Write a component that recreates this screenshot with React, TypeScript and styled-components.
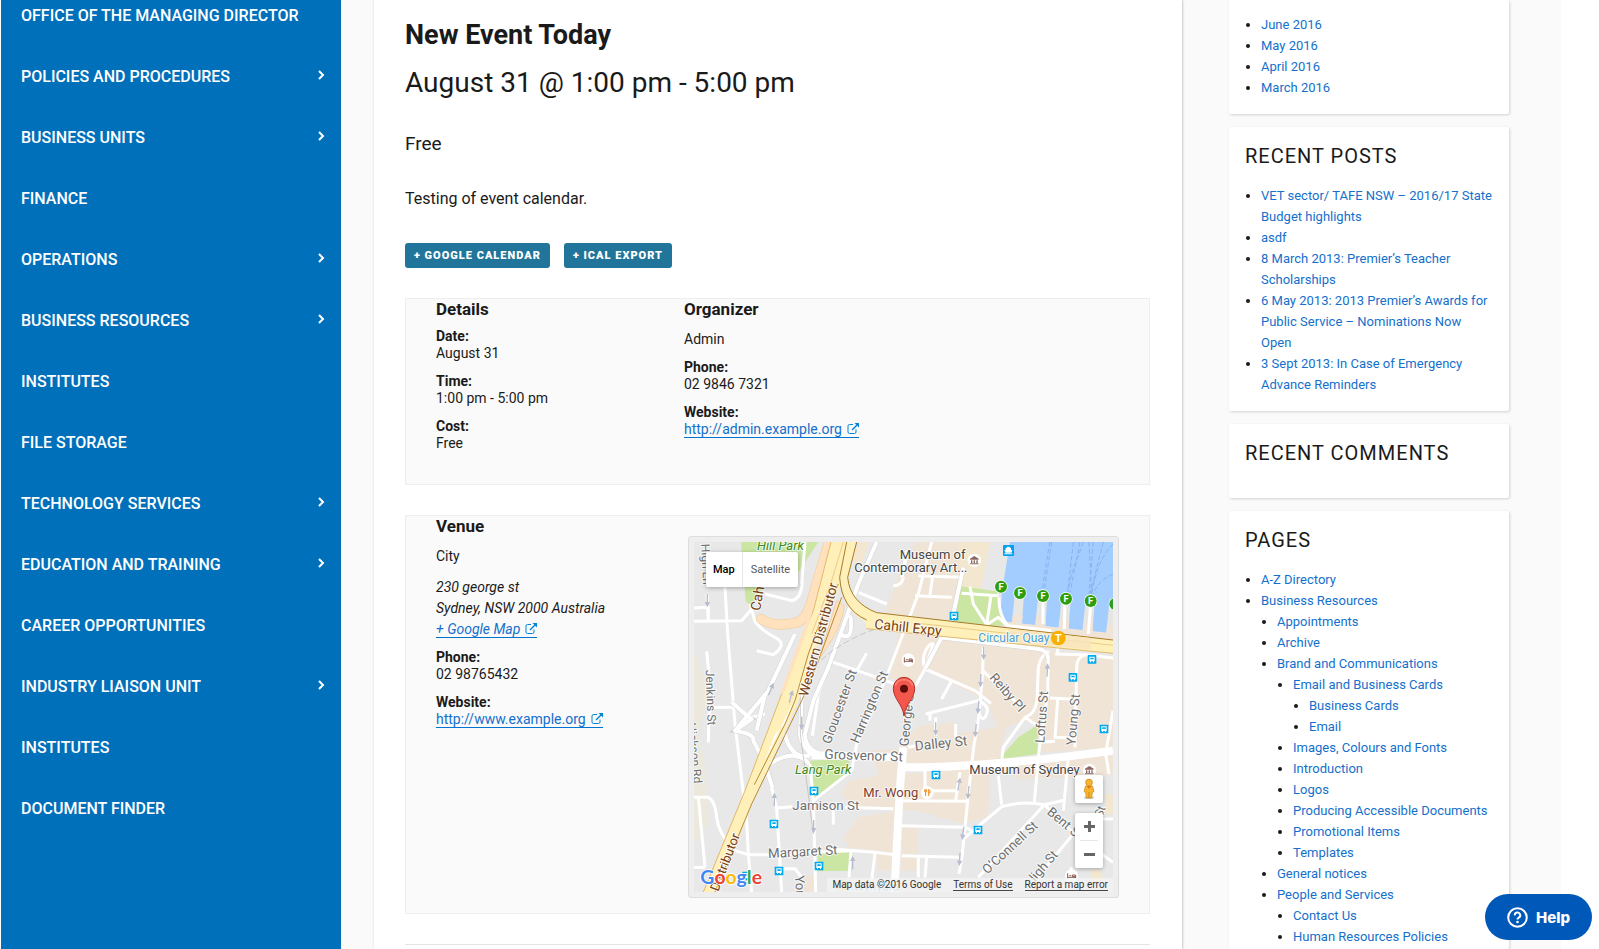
import React from 'react';
import styled, { createGlobalStyle, css } from 'styled-components';

const GlobalStyle = createGlobalStyle`
  *, *::before, *::after { box-sizing: border-box; }
  body {
    margin: 0;
    background: #fff;
    color: #1a1a1a;
    font-family: Roboto, "Liberation Sans", sans-serif;
    font-size: 14px;
  }
  h1, h2, h3, p, dl, dd, ul { margin: 0; padding: 0; }
  button { font: inherit; cursor: pointer; }
`;

/* ---------- page frame ---------- */

const Page = styled.div`
  display: flex;
  min-height: 100vh;
  padding: 0 38px 0 1px;
`;

const Sidebar = styled.nav`
  flex: 0 0 340px;
  background: #0070bb;
  overflow: hidden;
`;

const Menu = styled.ul`
  list-style: none;
  && { margin-top: -15px; }
`;

const MenuLink = styled.a`
  display: flex;
  align-items: center;
  justify-content: space-between;
  height: 61px;
  padding: 0 16px 0 20px;
  color: #fff;
  font-size: 16px;
  font-weight: 500;
  text-decoration: none;
  text-transform: uppercase;
  svg { margin-bottom: 3px; }
`;

const Body = styled.div`
  flex: 1;
  display: flex;
  gap: 47px;
  min-width: 0;
  padding: 0 52px 0 32px;
  background: #fafafa;
`;

const Main = styled.main`
  flex: 1;
  min-width: 0;
  padding: 17px 32px 0 31px;
  background: #fff;
  border-left: 1px solid #f0f0f0;
  box-shadow: 1px 0 2px rgba(0, 0, 0, 0.2);
`;

const Aside = styled.aside`
  flex: 0 0 280px;
  display: flex;
  flex-direction: column;
  gap: 13px;
`;

/* ---------- event ---------- */

const Title = styled.h1`
  font-size: 27px;
  line-height: 36px;
  font-weight: 700;
`;

const Schedule = styled.h2`
  padding-top: 12px;
  font-size: 28px;
  line-height: 36px;
  font-weight: 400;
`;

const Price = styled.p`
  padding-top: 31px;
  font-size: 19px;
  line-height: 24px;
`;

const Description = styled.p`
  padding-top: 29px;
  font-size: 16px;
  line-height: 28px;
`;

const Actions = styled.div`
  display: flex;
  gap: 14px;
  padding: 30px 0;
`;

const ExportButton = styled.button`
  height: 25px;
  padding: 0 9px;
  border: 0;
  border-radius: 3px;
  background: #21759b;
  color: #fff;
  font-size: 11px;
  line-height: 25px;
  font-weight: 900;
  letter-spacing: 1px;
  text-transform: uppercase;
`;

const Panel = styled.section<{ $first: number; $bottom: number }>`
  display: grid;
  grid-template-columns: ${(p) => p.$first}px minmax(0, 1fr);
  margin-bottom: 30px;
  padding: 0 30px ${(p) => p.$bottom}px;
  background: #fafafa;
  border: 1px solid #eee;
`;

const PanelTitle = styled.h3`
  margin-bottom: 9px;
  font-size: 17px;
  line-height: 20px;
  font-weight: 700;
`;

const Name = styled.p`
  && { padding: 1px 0 9px; }
  line-height: 21px;
`;

const Address = styled.address`
  padding: 1px 0 9px;
  line-height: 21px;
  font-style: italic;
`;

const Facts = styled.dl`
  display: flex;
  flex-direction: column;
  gap: 11px;
  line-height: 17px;
`;

const Term = styled.dt`
  font-weight: 700;
`;

const OuterLink = styled.a`
  border-bottom: 1px solid #0073d1;
  color: #1470cc;
  text-decoration: none;
  svg { margin-left: 5px; }
`;

const Rule = styled.hr`
  margin: 0;
  border: 0;
  border-top: 1px solid #e4e4e4;
`;

/* ---------- widgets ---------- */

const Widget = styled.section<{ $untitled?: boolean; $tail?: boolean }>`
  padding: ${(p) => (p.$untitled ? 14 : 21)}px 16px 16px;
  background: #fff;
  border-radius: 2px;
  box-shadow: 1px 1px 3px rgba(0, 0, 0, 0.16);
  ${(p) =>
    p.$tail &&
    css`
      flex: 1;
      padding-bottom: 0;
    `}
`;

const WidgetTitle = styled.h3`
  padding-bottom: 20px;
  font-size: 20px;
  line-height: 17px;
  font-weight: 400;
  letter-spacing: 1px;
  text-transform: uppercase;
`;

const Bullets = styled.ul`
  list-style: none;
  font-size: 13px;
  line-height: 21px;
  && { padding-left: 16px; }
  li { position: relative; }
  li::before {
    content: "";
    position: absolute;
    left: -15px;
    top: 9px;
    width: 4px;
    height: 4px;
    border-radius: 50%;
    background: #1a1a1a;
  }
  a {
    color: #1470cc;
    text-decoration: none;
  }
`;

const HelpButton = styled.button`
  position: fixed;
  right: 7px;
  bottom: 9px;
  display: flex;
  align-items: center;
  gap: 8px;
  height: 46px;
  padding: 0 22px;
  border: 0;
  border-radius: 23px;
  background: #0058b8;
  color: #fff;
  font-family: Inter, sans-serif;
  font-size: 15px;
  font-weight: 800;
`;

/* ---------- map ---------- */

const MapFrame = styled.div`
  margin-top: 20px;
  padding: 5px;
  border: 1px solid #ddd;
  border-radius: 3px;
  background: #eee;
`;

const MapView = styled.div`
  position: relative;
  overflow: hidden;
  height: 350px;
  background: #e8e8e8;
`;

const MapSvg = styled.svg`
  display: block;
  width: 100%;
  height: 100%;
`;

const TypeSwitch = styled.div`
  position: absolute;
  left: 12px;
  top: 10px;
  display: flex;
  border-radius: 2px;
  background: #fff;
  box-shadow: 0 1px 4px rgba(0, 0, 0, 0.3);
`;

const TypeButton = styled.button<{ $on?: boolean }>`
  height: 35px;
  padding: 0 ${(p) => (p.$on ? 7 : 8)}px;
  border: 0;
  border-left: ${(p) => (p.$on ? '0' : '1px solid #e6e6e6')};
  background: none;
  color: ${(p) => (p.$on ? '#000' : '#565656')};
  font-size: 11px;
  font-weight: ${(p) => (p.$on ? 500 : 400)};
`;

const MapTools = styled.div`
  position: absolute;
  right: 10px;
  bottom: 24px;
  display: flex;
  flex-direction: column;
  gap: 10px;
`;

const ToolBox = styled.div`
  width: 28px;
  border-radius: 2px;
  background: #fff;
  box-shadow: 0 1px 4px rgba(0, 0, 0, 0.3);
  hr {
    margin: 0 5px;
    border: 0;
    border-top: 1px solid #e6e6e6;
  }
`;

const ToolButton = styled.button<{ $h: number }>`
  display: flex;
  align-items: center;
  justify-content: center;
  width: 28px;
  height: ${(p) => p.$h}px;
  padding: 0;
  border: 0;
  background: none;
`;

const Credits = styled.div`
  position: absolute;
  right: 0;
  bottom: 0;
  display: flex;
  gap: 12px;
  height: 14px;
  padding: 0 5px;
  background: rgba(245, 245, 245, 0.7);
  color: #333;
  font-size: 10px;
  line-height: 13px;
  a {
    height: 13px;
    border-bottom: 1px solid #444;
    color: #333;
    text-decoration: none;
  }
`;

/* ---------- map drawing ---------- */

type LabelData = [text: string, x: number, y: number, angle: number, size: number, color: string, style?: string];

const GREY = '#6e6e6e';
const BROWN = '#754012';
const GREEN = '#3f8a1c';
const DARK = '#454545';

const labels: LabelData[] = [
  ['High Ln', 48, 30, 87, 36, GREY],
  ['Hill Park', 216, 47, 0, 39, GREEN, 'italic'],
  ['Cahill', 225, 232, -80, 42, BROWN],
  ['Western Distributor', 368, 490, -75, 41, BROWN],
  ['Distributor', 100, 1074, -69, 39, BROWN],
  ['Cahill Expy', 567, 284, 6, 42, BROWN],
  ['Jenkins St', 62, 408, 88, 36, GREY],
  ['Hickson Rd', 7, 568, 84, 36, GREY],
  ['Gloucester St', 436, 632, -70, 39, GREY],
  ['Harrington St', 520, 630, -67, 39, GREY],
  ['George St', 670, 638, -84, 39, GREY],
  ['Dalley St', 691, 650, -6, 41, GREY],
  ['Grosvenor St', 418, 674, 2, 41, GREY],
  ['Lang Park', 330, 721, 0, 39, GREEN, 'italic'],
  ['Jamison St', 322, 829, 0, 40, GREY],
  ['Margaret St', 250, 972, -3, 40, GREY],
  ['York St', 330, 1025, 87, 39, GREY],
  ['O’Connell St', 907, 1022, -43, 39, GREY],
  ['Bent St', 1084, 838, 40, 39, GREY],
  ['Reiby Pl', 912, 432, 49, 39, GREY],
  ['Loftus St', 1078, 628, -86, 39, GREY],
  ['Young St', 1171, 635, -85, 39, GREY],
  ['ligh St', 1050, 1045, -49, 39, GREY],
  ['St', 1250, 852, -68, 36, GREY],
  ['Museum of', 644, 74, 0, 39, DARK],
  ['Contemporary Art...', 508, 113, 0, 39, DARK],
  ['Museum of Sydney', 853, 721, 0, 39, DARK],
  ['Mr. Wong', 535, 790, 0, 39, '#7d4034'],
  ['Circular Quay', 880, 325, 0, 36, '#4a9fd0'],
  ['Wynyard', 505, 1070, 0, 36, '#8cc3e0'],
];

const beige = [
  'M690 24H860L830 140 802 262 600 236 640 130Z',
  'M640 290 770 308 1284 372V640L1062 656 1058 572 1012 560 940 590 905 500 745 420 718 400 690 452 612 432Z',
  'M700 575 812 566 816 600 965 575 940 680 700 702 640 700 580 720 560 650 640 646Z',
  'M660 720 916 700 910 850 830 870 700 830 650 830Z',
  'M585 650 640 646 632 830 500 820 470 780 490 740 580 724Z',
  'M520 850 630 832 620 1010 580 1010 570 950 490 940 475 910Z',
  'M650 880H700V1010H650Z',
  'M940 690 1284 660V722L1000 736Z',
  'M360 1024H390V1074H350Z',
];

const yellowish = [
  'M820 24H915L888 165 830 160Z',
  'M520 24H550L530 90 500 80Z',
  'M1260 780H1284V840H1262Z',
  'M1215 1010 1245 1005 1255 1040 1225 1050Z',
];

const parks = [
  'M168 24H400L330 130 240 150 200 220 182 200Z',
  'M815 155 935 172 945 215 968 275 905 275 802 262Z',
  'M372 680 495 672 490 715 385 795 376 740Z',
  'M398 958 502 952V1010L398 1012Z',
  'M1058 572V660L940 676 1000 610Z',
];

const thinRoads = [
  'M27 262 170 260 200 225', 'M27 222 70 220V262', 'M66 180 70 262', 'M120 160 128 300 150 570 185 860 190 960 200 1074',
  'M65 352 75 450 70 625', 'M80 520H150', 'M27 790H70Q90 800 95 850T150 950L190 962 260 962', 'M40 790 60 1000', 'M27 1000H60',
  'M240 180 320 200Q350 195 352 140', 'M195 210 210 262Q230 290 270 310T265 362L215 350',
  'M140 505 200 550 240 540', 'M520 175 605 210', 'M655 110Q660 155 625 155', 'M545 358 515 410',
  'M437 382 560 425 630 450', 'M437 382 400 480 382 605', 'M690 185 800 190', 'M745 110 735 185', 'M700 125 830 130',
  'M720 405 745 330Q735 325 722 350T720 405L692 455', 'M720 405 870 470 918 508', 'M800 440 770 495',
  'M722 540 880 500Q915 515 905 540T885 545', 'M735 540V560', 'M752 550V605', 'M812 570V610', 'M670 640 690 636',
  'M895 340 893 410 882 545 866 640 850 780 832 960 822 1020', 'M893 410 1010 520', 'M1090 350Q1065 370 1060 400L1056 500Q1050 540 1020 550L955 640 950 680',
  'M1020 550 1052 572', 'M1090 350 1088 480 1062 650 1048 805', 'M1095 492 1170 496', 'M1118 496 1110 610 1165 612', 'M1200 362Q1175 370 1175 400L1170 640',
  'M1110 360 1200 362 1284 372', 'M1060 625 1110 622', 'M1284 530 1262 660 1272 720',
  'M1150 670 1135 830', 'M940 725 950 812', 'M835 915 950 818Q1010 800 1078 812L1140 798', 'M1078 812 880 1030', 'M1078 812 1190 920', 'M1165 900 1040 1050',
  'M720 700V770H815', 'M825 715 812 800', 'M650 800 845 802', 'M645 875 840 880 862 890', 'M650 965 822 970', 'M725 970 720 1030', 'M700 970V1030',
  'M440 945 570 955 630 962', 'M570 958 560 1040', 'M498 950 492 1030', 'M275 822 322 818', 'M480 820 625 824', 'M445 820V872',
  'M260 760 275 822 290 1074', 'M375 690 385 800 392 1074', 'M385 800 500 710 515 630 600 440 700 180 740 24', 'M290 962 360 956 498 950', 'M290 1004 330 1004 350 1030',
  'M855 158 865 210 905 272', 'M830 178 940 185', 'M918 185 905 272', 'M942 190Q940 240 968 275L1100 290', 'M905 272 940 250 968 275',
  'M1074 190V270', 'M1140 200 1138 285', 'M1217 210 1210 300', 'M1290 215V300', 'M1118 330V358', 'M1160 1000 1140 1060', 'M1250 960 1284 985', 'M1240 855H1284', 'M360 24 350 150',
];

const midRoads = [
  'M835 100 800 262 770 310 720 405', 'M765 310 1060 345Q1088 348 1090 375', 'M667 50 650 130',
  'M575 24 520 150 470 290 430 400 385 500 360 600Q360 650 420 664', 'M490 250Q500 240 498 280T465 300',
  'M330 300 250 470 150 590', 'M140 505Q190 550 200 555L150 590Q210 600 205 620L240 690 262 760',
  'M355 380 345 600Q350 640 385 665', 'M300 600Q310 650 345 665H375', 'M240 480 215 590', 'M255 690Q330 640 372 690',
];

const wideRoads = ['M650 700Q900 702 1284 650', 'M655 640 645 760 628 1074', 'M380 664 655 670'];

const arrows: [number, number, number][] = [
  [67, 200, 180], [258, 465, 22], [318, 487, 15], [350, 568, 180], [268, 796, 0], [386, 878, 180], [503, 985, 0],
  [752, 585, 180], [872, 590, 185], [880, 520, 185], [887, 440, 183], [896, 358, 180], [1087, 408, 3],
  [822, 750, 10], [850, 776, 185], [834, 898, 187], [824, 976, 183],
];

const busStops: [number, number][] = [
  [807, 246], [1221, 376], [1164, 430], [1257, 585], [753, 723], [387, 771], [267, 870], [282, 1011], [402, 996], [879, 888], [185, 1026],
];

const ferries: [number, number][] = [[948, 158], [1005, 177], [1074, 186], [1143, 194], [1217, 201], [1291, 210]];

const piers = [990, 1060, 1130, 1202, 1273];

const Roads = ({ paths, width }: { paths: string[]; width: number }) => (
  <>
    {paths.map((d) => (
      <path key={d} d={d} fill="none" stroke="#fff" strokeWidth={width} strokeLinejoin="round" />
    ))}
  </>
);

const Areas = ({ paths, fill }: { paths: string[]; fill: string }) => (
  <>
    {paths.map((d) => (
      <path key={d} d={d} fill={fill} />
    ))}
  </>
);

const MuseumIcon = ({ x, y }: { x: number; y: number }) => (
  <g transform={`translate(${x} ${y})`}>
    <circle r="20" fill="#fff" />
    <path d="M-13-5 0-13 13-5V-2H-13ZM-10 0H-6V8H-10ZM-2 0H2V8H-2ZM6 0H10V8H6ZM-13 9H13V12H-13Z" fill="#8a6660" />
  </g>
);

const HotelIcon = ({ x, y }: { x: number; y: number }) => (
  <g transform={`translate(${x} ${y})`}>
    <circle r="20" fill="#fff" />
    <path d="M-12-8V8M12-2V8M-12 4H12M-7-1H-2M2-3H11V2H2Z" stroke="#8a5a50" strokeWidth="3" fill="none" />
  </g>
);

const StreetMap = () => (
  <MapSvg viewBox="27 24 1257 1050" preserveAspectRatio="xMidYMid slice" role="img" aria-label="Map of 230 George St, Sydney">
    <rect x="-600" y="0" width="2600" height="1100" fill="#e8e8e8" />
    <Areas paths={beige} fill="#f0e4d7" />
    <Areas paths={yellowish} fill="#f3e8cf" />
    <path d="M27 350 70 470 40 600 60 700 72 860 40 920H27Z" fill="#ece8dc" />
    <Areas paths={parks} fill="#cae6a2" />
    <path d="M975 24H1284V300L950 262Q945 230 952 165Z" fill="#a3ccff" />
    <path d="M950 262 1284 298V330L960 290Z" fill="#f0e4d7" />
    {piers.map((x, i) => (
      <g key={x}>
        <path d={`M${x} ${172 + i * 8}H${x + 28}L${x + 20} ${276 + i * 7}H${x - 10}Z`} fill="#e6e6e2" />
        <path d={`M${x - 7} ${244 + i * 7}H${x + 23}L${x + 20} ${284 + i * 7}H${x - 10}Z`} fill="#f0e4d7" />
      </g>
    ))}
    <g fill="none" stroke="#86b3f2" strokeWidth="3" strokeDasharray="14 7">
      <path d="M1100 24 1078 165" />
      <path d="M1094 24 1072 165" />
      <path d="M1165 24 1148 175" />
      <path d="M1185 24 1155 175" />
      <path d="M1195 24 1160 120 1148 175" />
      <path d="M1212 24 1220 180" />
      <path d="M1225 24 1212 180" />
      <path d="M1255 24 1215 180" />
      <path d="M1284 30Q1235 80 1220 180" />
      <path d="M1284 120Q1240 140 1224 180" />
    </g>
    <Roads paths={thinRoads} width={9} />
    <g fill="none" stroke="#d4d4d4" strokeWidth="15">
      {midRoads.map((d) => <path key={d} d={d} />)}
    </g>
    <Roads paths={midRoads} width={12} />
    <Roads paths={wideRoads} width={24} />

    <g fill="none" stroke="#b5b5b5" strokeWidth="2">
      <path d="M346 480V600L362 720 385 900" />
      <path d="M370 420Q440 330 575 284" strokeDasharray="20 8" />
    </g>

    {/* ramps */}
    <path d="M430 30Q400 130 380 200T320 268Q270 280 228 255" fill="none" stroke="#f3cf9f" strokeWidth="30" strokeLinecap="round" />
    <path d="M430 30Q400 130 380 200T320 268Q270 280 228 255" fill="none" stroke="#ffe2bd" strokeWidth="26" strokeLinecap="round" />
    <path d="M455 200 478 215Q470 270 445 310L400 380Z" fill="#ffe2bd" stroke="#f0c994" strokeWidth="2" />

    {/* western distributor */}
    <path d="M438 24H515L478 130 420 260 385 370 345 490 210 790 95 1074H55L180 770 290 480 335 350 385 230Z" fill="#ffefb9" />
    <path d="M438 24 385 230 335 350 290 480 180 770 55 1074" fill="none" stroke="#e0b96c" strokeWidth="3" />
    <path d="M455 170 370 380 300 570 270 600 240 680 335 480 385 340Z" fill="#fff" />
    <path d="M390 180 370 260 320 400 290 480" fill="none" stroke="#ffe2bd" strokeWidth="10" />
    <path d="M470 190 400 380 350 500 200 810 90 1074" fill="none" stroke="#b98a35" strokeWidth="3" />
    <path d="M460 150 410 250 370 360 330 500 300 570 208 752" fill="none" stroke="#b98a35" strokeWidth="3" />
    <path d="M475 24 440 140 380 300" fill="none" stroke="#e0b96c" strokeWidth="2" />

    {/* cahill expressway */}
    <path
      d="M478 24H515L488 130Q495 205 575 236L800 262 1284 318V358L1150 345 700 300 545 284 540 262Q470 225 464 130Z"
      fill="#ffefb9"
    />
    <path d="M515 24 488 130Q495 205 575 236L800 262 1284 318" fill="none" stroke="#a87b26" strokeWidth="3" />
    <path d="M485 24 464 130Q470 225 545 258" fill="none" stroke="#a87b26" strokeWidth="3" />
    <path d="M545 284 700 300 1150 345 1284 358" fill="none" stroke="#e0b96c" strokeWidth="3" />
    <path d="M700 268 1284 334" fill="none" stroke="#e0b96c" strokeWidth="2" />
    <path d="M970 284 1218 312V346L965 325Z" fill="#f8e3bd" opacity="0.8" />

    {arrows.map(([x, y, a]) => (
      <path key={`${x}-${y}`} transform={`translate(${x} ${y}) rotate(${a})`} d="M-2 20V-4H-8L0-20 8-4H2V20Z" fill="#b7bccf" />
    ))}

    <g fontFamily='Roboto, "Liberation Sans", sans-serif' stroke="#fff" strokeOpacity="0.75" strokeWidth="6" strokeLinejoin="round" paintOrder="stroke">
      {labels.map(([text, x, y, angle, size, color, style]) => (
        <text
          key={`${text}-${x}`}
          transform={`translate(${x} ${y}) rotate(${angle})`}
          fontSize={size}
          fill={color}
          fontStyle={style}
        >
          {text}
        </text>
      ))}
    </g>

    {busStops.map(([x, y]) => (
      <g key={`${x}-${y}`} transform={`translate(${x} ${y})`}>
        <rect x="-13" y="-13" width="26" height="26" rx="2" fill="#00aaf0" />
        <path d="M-8-8H8V6H6V9H3V6H-3V9H-6V6H-8ZM-5-5V0H5V-5Z" fill="#fff" fillRule="evenodd" />
      </g>
    ))}
    <g transform="translate(970 49)">
      <rect x="-16" y="-16" width="33" height="33" rx="3" fill="#00a0f0" />
      <path d="M-4-11H4V-8H8V-2L12 0 9 7H-9L-12 0-8-2V-8H-4ZM-12 9H12V12H-12Z" fill="#fff" />
    </g>
    {ferries.map(([x, y]) => (
      <g key={x} transform={`translate(${x} ${y})`}>
        <circle r="20" fill="#fff" />
        <circle r="18" fill="#2f9e0c" />
        <text y="10" fontSize="28" fontWeight="700" fontFamily="Roboto, sans-serif" textAnchor="middle" fill="#fff">F</text>
      </g>
    ))}
    <g transform="translate(1120 312)">
      <circle r="22" fill="#f7b000" />
      <text y="12" fontSize="34" fontWeight="700" fontFamily="Roboto, sans-serif" textAnchor="middle" fill="#fff">T</text>
    </g>
    <circle cx="472" cy="1054" r="18" fill="#f5d9a0" />
    <MuseumIcon x={868} y={79} />
    <MuseumIcon x={1213} y={709} />
    <HotelIcon x={670} y={378} />
    <HotelIcon x={1160} y={1026} />
    <g transform="translate(727 776)">
      <circle r="19" fill="#fff" />
      <path d="M-8-10V-3Q-5 1-2-3V-10M-5-10V10M4 10V-10Q10-8 8 1H4" fill="none" stroke="#f08a1d" strokeWidth="3" />
    </g>

    <path d="M657 546C653 510 625 495 625 463A32 33 0 0 1 689 463C689 495 661 510 657 546Z" fill="#f4584c" stroke="#b5322a" strokeWidth="3" />
    <path d="M631 455A27 25 0 0 1 683 455" fill="none" stroke="#f98078" strokeWidth="5" />
    <circle cx="657" cy="464" r="12" fill="#5c0d0a" />

    <text x="46" y="1050" fontSize="58" fontFamily="Lato, sans-serif" fontWeight="700" stroke="#fff" strokeWidth="5" paintOrder="stroke">
      <tspan fill="#4285f4">G</tspan>
      <tspan fill="#ea4335">o</tspan>
      <tspan fill="#fbbc05">o</tspan>
      <tspan fill="#4285f4">g</tspan>
      <tspan fill="#34a853">l</tspan>
      <tspan fill="#ea4335">e</tspan>
    </text>
  </MapSvg>
);

/* ---------- small icons ---------- */

const Chevron = () => (
  <svg width="7" height="10" viewBox="0 0 7 10" fill="none" stroke="#fff" strokeWidth="2" aria-hidden="true">
    <path d="M1 1 5 5 1 9" />
  </svg>
);

const ExternalIcon = () => (
  <svg width="12" height="11" viewBox="0 0 12 11" fill="none" stroke="#0085d6" aria-hidden="true">
    <path d="M6 1.5H2.5Q1 1.5 1 3V9Q1 10.5 2.5 10.5H7.5Q9 10.5 9 9V6.5" />
    <path d="M5 7 10 2" strokeWidth="1.4" />
    <path d="M7.5 0H12V4.5Z" fill="#0085d6" stroke="none" />
  </svg>
);

const HelpIcon = () => (
  <svg width="21" height="21" viewBox="0 0 21 21" fill="none" stroke="#fff" strokeWidth="2" aria-hidden="true">
    <circle cx="10.500" cy="10.500" r="9.300" />
    <path d="M7.800 8.400A2.700 2.700 0 1 1 11.700 10.600Q10.500 11.200 10.500 12.500" />
    <circle cx="10.500" cy="15" r="1.300" fill="#fff" stroke="none" />
  </svg>
);

const Pegman = () => (
  <svg width="14" height="22" viewBox="0 0 14 22" aria-hidden="true">
    <ellipse cx="7" cy="19.500" rx="5" ry="1.500" fill="#ccc" />
    <path d="M3.500 8H10.500L12 13.500 10.300 14.500 9.700 20H4.300L3.700 14.500 2 13.500Z" fill="#f9b42d" stroke="#c98a1a" strokeWidth="0.700" />
    <path d="M5 8 7 11 9 8Z" fill="#e0701d" />
    <path d="M7 14V20" stroke="#c98a1a" />
    <circle cx="7" cy="4.500" r="3.400" fill="#f9b42d" stroke="#c98a1a" strokeWidth="0.700" />
  </svg>
);

const ZoomIcon = ({ plus }: { plus?: boolean }) => (
  <svg width="11" height="11" viewBox="0 0 11 11" fill="#666" aria-hidden="true">
    <path d={plus ? 'M0 4H4V0H7V4H11V7H7V11H4V7H0Z' : 'M0 4H11V7H0Z'} />
  </svg>
);

/* ---------- content ---------- */

const menu: [string, boolean][] = [
  ['Office of the Managing Director', false],
  ['Policies and Procedures', true],
  ['Business Units', true],
  ['Finance', false],
  ['Operations', true],
  ['Business Resources', true],
  ['Institutes', false],
  ['File Storage', false],
  ['Technology Services', true],
  ['Education and Training', true],
  ['Career Opportunities', false],
  ['Industry Liaison Unit', true],
  ['Institutes', false],
  ['Document Finder', false],
];

type Item = { label: string; children?: Item[] };

const leaf = (...names: string[]): Item[] => names.map((label) => ({ label }));

const archives = leaf('June 2016', 'May 2016', 'April 2016', 'March 2016');

const posts = leaf(
  'VET sector/ TAFE NSW – 2016/17 State Budget highlights',
  'asdf',
  '8 March 2013: Premier’s Teacher Scholarships',
  '6 May 2013: 2013 Premier’s Awards for Public Service – Nominations Now Open',
  '3 Sept 2013: In Case of Emergency Advance Reminders',
);

const pages: Item[] = [
  { label: 'A-Z Directory' },
  {
    label: 'Business Resources',
    children: [
      ...leaf('Appointments', 'Archive'),
      {
        label: 'Brand and Communications',
        children: [
          { label: 'Email and Business Cards', children: leaf('Business Cards', 'Email') },
          ...leaf('Images, Colours and Fonts', 'Introduction', 'Logos', 'Producing Accessible Documents', 'Promotional Items', 'Templates'),
        ],
      },
      { label: 'General notices' },
      { label: 'People and Services', children: leaf('Contact Us', 'Human Resources Policies') },
    ],
  },
];

const LinkList = ({ items }: { items: Item[] }) => (
  <Bullets>
    {items.map((item) => (
      <li key={item.label}>
        <a href="#">{item.label}</a>
        {item.children && <LinkList items={item.children} />}
      </li>
    ))}
  </Bullets>
);

const Fact = ({ term, children }: { term: string; children: React.ReactNode }) => (
  <div>
    <Term>{term}:</Term>
    <dd>{children}</dd>
  </div>
);

const External = ({ children }: { children: React.ReactNode }) => (
  <OuterLink href="#">
    {children}
    <ExternalIcon />
  </OuterLink>
);

export default function App() {
  return (
    <>
      <GlobalStyle />
      <Page>
        <Sidebar aria-label="Main menu">
          <Menu>
            {menu.map(([label, more], i) => (
              <li key={i}>
                <MenuLink href="#">
                  {label}
                  {more && <Chevron />}
                </MenuLink>
              </li>
            ))}
          </Menu>
        </Sidebar>
        <Body>
          <Main>
            <Title>New Event Today</Title>
            <Schedule>August 31 @ 1:00 pm - 5:00 pm</Schedule>
            <Price>Free</Price>
            <Description>Testing of event calendar.</Description>
            <Actions>
              <ExportButton type="button">+ Google Calendar</ExportButton>
              <ExportButton type="button">+ iCal Export</ExportButton>
            </Actions>
            <Panel $first={248} $bottom={32}>
              <div>
                <PanelTitle>Details</PanelTitle>
                <Facts>
                  <Fact term="Date">August 31</Fact>
                  <Fact term="Time">1:00 pm - 5:00 pm</Fact>
                  <Fact term="Cost">Free</Fact>
                </Facts>
              </div>
              <div>
                <PanelTitle>Organizer</PanelTitle>
                <Name>Admin</Name>
                <Facts>
                  <Fact term="Phone">02 9846 7321</Fact>
                  <Fact term="Website">
                    <External>http://admin.example.org</External>
                  </Fact>
                </Facts>
              </div>
            </Panel>
            <Panel $first={252} $bottom={15}>
              <div>
                <PanelTitle>Venue</PanelTitle>
                <Name>City</Name>
                <Address>
                  230 george st
                  <br />
                  Sydney, NSW 2000 Australia
                  <br />
                  <External>+ Google Map</External>
                </Address>
                <Facts>
                  <Fact term="Phone">02 98765432</Fact>
                  <Fact term="Website">
                    <External>http://www.example.org</External>
                  </Fact>
                </Facts>
              </div>
              <MapFrame>
                <MapView>
                  <StreetMap />
                  <TypeSwitch>
                    <TypeButton type="button" $on>Map</TypeButton>
                    <TypeButton type="button">Satellite</TypeButton>
                  </TypeSwitch>
                  <MapTools>
                    <ToolBox>
                      <ToolButton type="button" $h={28} aria-label="Street View"><Pegman /></ToolButton>
                    </ToolBox>
                    <ToolBox>
                      <ToolButton type="button" $h={27} aria-label="Zoom in"><ZoomIcon plus /></ToolButton>
                      <hr />
                      <ToolButton type="button" $h={27} aria-label="Zoom out"><ZoomIcon /></ToolButton>
                    </ToolBox>
                  </MapTools>
                  <Credits>
                    <span>Map data ©2016 Google</span>
                    <a href="#">Terms of Use</a>
                    <a href="#">Report a map error</a>
                  </Credits>
                </MapView>
              </MapFrame>
            </Panel>
            <Rule />
          </Main>
          <Aside>
            <Widget $untitled>
              <LinkList items={archives} />
            </Widget>
            <Widget>
              <WidgetTitle>Recent Posts</WidgetTitle>
              <LinkList items={posts} />
            </Widget>
            <Widget>
              <WidgetTitle>Recent Comments</WidgetTitle>
            </Widget>
            <Widget $tail>
              <WidgetTitle>Pages</WidgetTitle>
              <LinkList items={pages} />
            </Widget>
          </Aside>
        </Body>
      </Page>
      <HelpButton type="button">
        <HelpIcon />
        Help
      </HelpButton>
    </>
  );
}
